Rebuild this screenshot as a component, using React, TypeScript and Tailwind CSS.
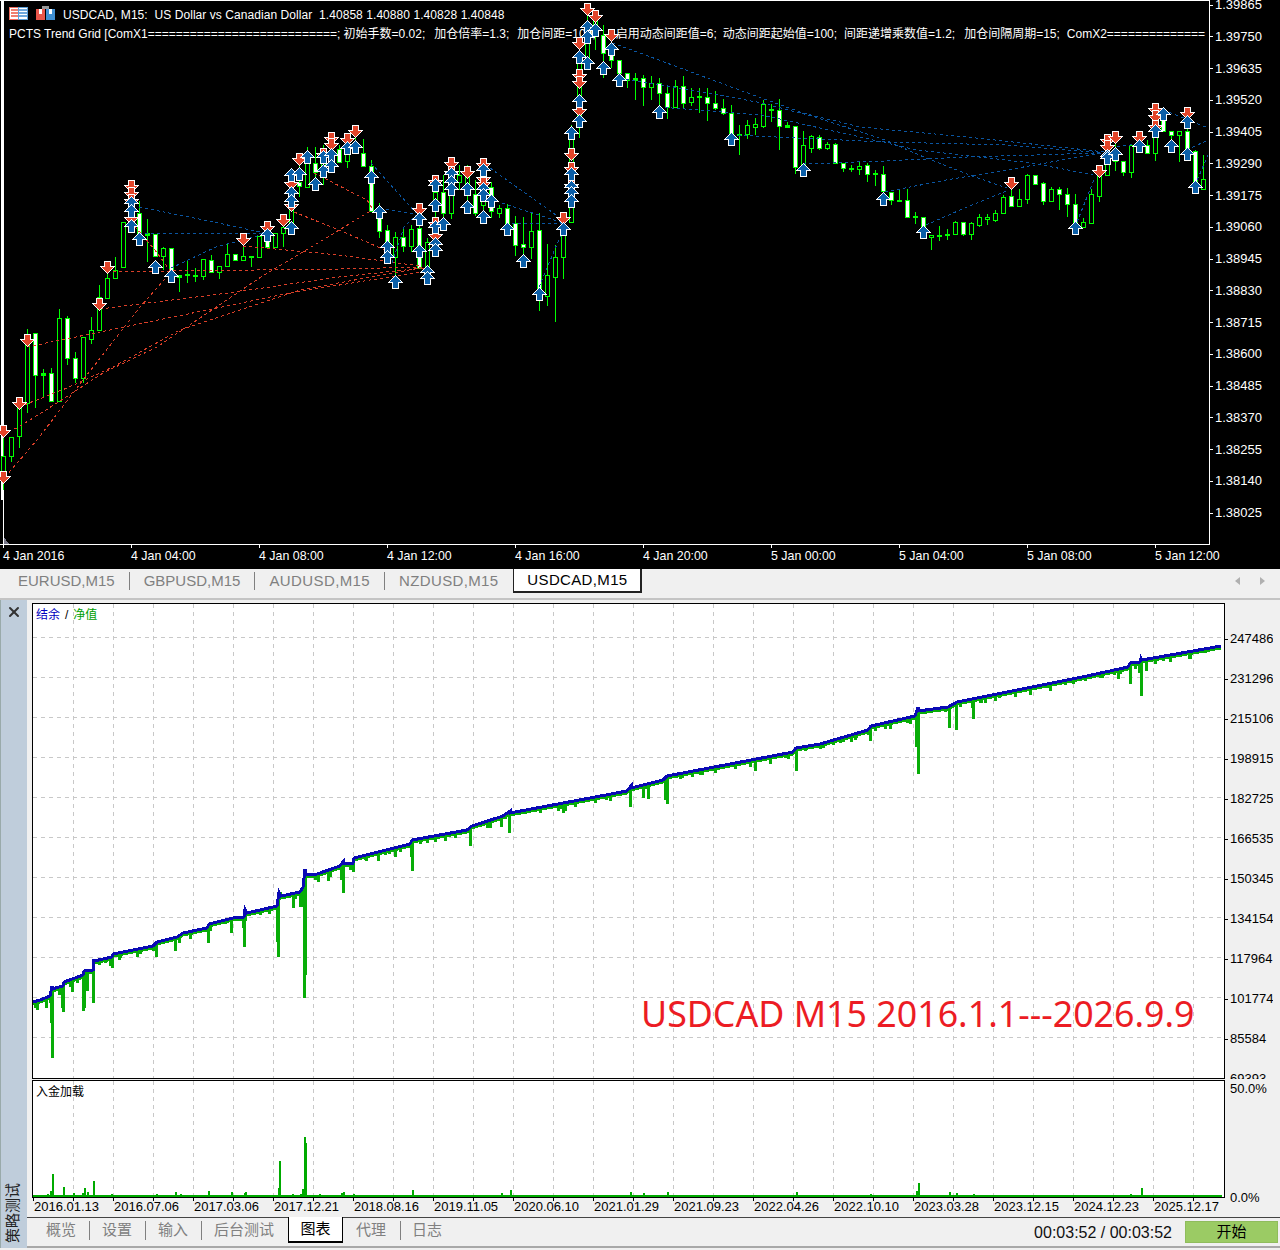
import { X } from "lucide-react";

type Candle = [number, number, number, number, number];
type Pt = [number, number];

const sans = "font-['Liberation_Sans','Noto_Sans_CJK_SC',sans-serif]";

// top, bottom, high, low, white body (pixel rows of the chart, one per 8px bar)
const candles: Candle[] = [
  [456, 475, 426, 490, 0], [437, 456, 437, 462, 0], [408, 436, 405, 448, 0], [343, 403, 329, 413, 0],
  [333, 375, 333, 408, 1], [373, 375, 369, 398, 2], [373, 401, 368, 401, 1], [318, 401, 309, 401, 0],
  [318, 358, 316, 365, 1], [358, 378, 352, 383, 1], [337, 378, 337, 383, 0], [330, 339, 317, 344, 0],
  [297, 330, 285, 330, 0], [278, 298, 262, 298, 0], [270, 278, 257, 278, 0], [222, 267, 222, 267, 0],
  [190, 222, 180, 230, 0], [213, 233, 201, 233, 1], [233, 235, 219, 262, 2], [234, 256, 234, 256, 1],
  [248, 256, 247, 270, 0], [248, 272, 248, 272, 1], [275, 277, 275, 292, 2], [274, 275, 260, 283, 2],
  [275, 276, 268, 282, 2], [259, 276, 259, 280, 0], [260, 272, 255, 272, 1], [266, 272, 266, 279, 0],
  [254, 266, 243, 266, 0], [254, 260, 254, 260, 1], [256, 260, 243, 260, 0], [256, 257, 256, 267, 2],
  [236, 257, 236, 257, 0], [236, 247, 236, 247, 1], [233, 247, 233, 247, 0], [227, 233, 222, 247, 0],
  [210, 228, 208, 228, 0], [182, 186, 165, 197, 1], [163, 187, 147, 187, 0], [163, 172, 147, 185, 1],
  [160, 173, 145, 185, 0], [152, 170, 142, 170, 0], [149, 162, 145, 162, 1], [152, 161, 140, 168, 0],
  [148, 152, 135, 152, 0], [153, 166, 139, 166, 1], [166, 211, 160, 211, 1], [216, 231, 203, 238, 1],
  [230, 245, 225, 260, 1], [237, 257, 232, 275, 0], [237, 246, 228, 252, 1], [229, 246, 225, 252, 0],
  [228, 268, 222, 268, 1], [242, 268, 238, 275, 0], [192, 210, 180, 240, 0], [192, 213, 175, 220, 1],
  [193, 213, 165, 219, 0], [175, 182, 165, 190, 0], [177, 195, 165, 210, 0], [194, 213, 180, 216, 1],
  [175, 205, 160, 212, 0], [187, 211, 182, 218, 1], [208, 213, 205, 218, 0], [208, 225, 204, 230, 1],
  [223, 245, 216, 256, 1], [244, 247, 217, 255, 1], [231, 247, 213, 259, 0], [230, 290, 213, 311, 1],
  [275, 296, 244, 306, 0], [257, 277, 245, 322, 0], [230, 257, 220, 279, 0], [137, 222, 125, 222, 0],
  [60, 127, 40, 138, 0], [25, 68, 10, 68, 0], [20, 35, 16, 50, 0], [35, 53, 25, 78, 1],
  [53, 60, 37, 68, 1], [60, 73, 60, 80, 1], [73, 80, 73, 88, 1], [78, 80, 73, 100, 2],
  [78, 87, 75, 106, 1], [83, 87, 76, 100, 0], [83, 93, 78, 106, 1], [93, 107, 87, 119, 1],
  [86, 107, 80, 107, 0], [86, 103, 76, 108, 1], [97, 102, 88, 106, 0], [96, 97, 88, 113, 2],
  [97, 103, 88, 121, 1], [103, 108, 91, 110, 1], [108, 113, 99, 115, 1], [113, 135, 105, 141, 1],
  [134, 135, 125, 155, 2], [125, 134, 120, 139, 0], [124, 127, 118, 135, 0], [104, 126, 100, 128, 0],
  [109, 110, 104, 122, 2], [110, 126, 99, 150, 1], [125, 127, 122, 128, 2], [126, 167, 126, 174, 1],
  [145, 167, 131, 173, 0], [136, 148, 135, 153, 0], [137, 148, 135, 150, 1], [144, 148, 142, 150, 0],
  [144, 163, 143, 163, 1], [163, 168, 163, 172, 1], [168, 169, 165, 172, 2], [166, 169, 162, 175, 0],
  [165, 174, 163, 182, 1], [173, 174, 170, 186, 2], [174, 191, 166, 195, 1], [192, 200, 192, 205, 1],
  [200, 201, 190, 201, 2], [200, 217, 189, 217, 1], [216, 217, 212, 224, 1], [217, 235, 217, 238, 1],
  [235, 237, 235, 250, 0], [235, 236, 226, 241, 2], [234, 235, 229, 240, 2], [222, 234, 221, 235, 0],
  [222, 234, 222, 236, 1], [223, 234, 222, 240, 0], [217, 225, 214, 227, 0], [217, 219, 214, 225, 0],
  [213, 220, 210, 222, 0], [197, 213, 195, 214, 0], [196, 206, 186, 207, 1], [199, 206, 189, 206, 0],
  [175, 199, 174, 204, 0], [175, 184, 175, 184, 1], [183, 201, 182, 205, 1], [189, 201, 187, 201, 0],
  [189, 194, 187, 210, 1], [194, 204, 188, 217, 1], [204, 227, 194, 231, 1], [222, 227, 218, 228, 0],
  [194, 223, 189, 223, 0], [175, 196, 170, 202, 0], [160, 175, 150, 175, 0], [153, 161, 140, 171, 1],
  [161, 172, 161, 176, 1], [145, 172, 145, 178, 0], [143, 145, 143, 147, 0], [145, 153, 140, 153, 1],
  [137, 153, 120, 161, 0], [119, 131, 110, 131, 1], [131, 135, 131, 153, 1], [131, 135, 131, 162, 0],
  [131, 150, 120, 150, 1], [151, 190, 150, 190, 1], [179, 189, 155, 190, 0],
];

const downArrows: Pt[] = [
  [3, 431], [3, 477], [19, 403], [27, 340], [99, 304], [107, 267], [131, 186], [131, 193], [131, 200], [131, 218],
  [243, 239], [267, 227], [283, 220], [291, 183], [291, 205], [299, 159], [323, 154], [331, 138], [331, 144],
  [347, 139], [355, 131], [419, 209], [435, 181], [435, 223], [435, 235], [451, 163], [451, 172], [467, 172],
  [483, 164], [483, 178], [483, 183], [563, 218], [571, 154], [571, 168], [571, 185], [579, 43], [579, 75],
  [579, 82], [579, 110], [587, 9], [595, 16], [611, 35], [1011, 183], [1099, 171], [1107, 140], [1107, 146],
  [1115, 137], [1139, 137], [1155, 109], [1155, 116], [1155, 126], [1187, 113],
];

const upArrows: Pt[] = [
  [131, 203], [131, 211], [131, 226], [139, 239], [155, 267], [171, 276], [267, 235], [291, 175], [291, 193],
  [291, 201], [291, 228], [299, 174], [307, 157], [315, 184], [323, 157], [323, 171], [331, 155], [331, 166],
  [347, 148], [355, 147], [371, 177], [379, 212], [387, 247], [387, 257], [395, 282], [419, 219], [419, 251],
  [427, 272], [427, 278], [435, 185], [435, 205], [435, 227], [435, 244], [435, 250], [443, 224], [451, 174],
  [451, 182], [451, 189], [467, 189], [467, 207], [483, 170], [483, 189], [483, 195], [483, 217], [491, 201],
  [507, 229], [523, 261], [539, 294], [563, 229], [571, 133], [571, 174], [571, 187], [571, 193], [571, 201],
  [579, 57], [579, 101], [579, 121], [587, 27], [587, 37], [587, 63], [595, 30], [603, 68], [611, 49], [619, 80],
  [659, 112], [731, 139], [803, 170], [883, 199], [923, 232], [1075, 228], [1107, 156], [1107, 158], [1115, 154],
  [1139, 146], [1155, 131], [1163, 114], [1171, 146], [1187, 122], [1187, 154], [1195, 187],
];

const redLines: Pt[][] = [
  [[5, 477], [37, 440], [60, 410], [83, 380], [140, 307], [171, 272]],
  [[3, 433], [17, 428], [57, 403], [103, 373], [157, 347], [261, 277], [318, 243], [372, 210]],
  [[19, 407], [67, 388], [113, 367], [180, 330], [300, 290], [420, 268]],
  [[27, 347], [100, 332], [173, 317], [290, 293], [420, 272]],
  [[100, 309], [228, 293], [339, 277], [424, 268]],
  [[107, 272], [171, 271], [339, 269], [424, 267]],
  [[243, 246], [339, 255], [420, 266]],
  [[294, 212], [339, 230], [385, 250]],
  [[314, 173], [367, 200], [372, 208]],
  [[131, 222], [155, 250], [171, 272]],
];

const blueLines: Pt[][] = [
  [[139, 207], [204, 220], [265, 233]],
  [[139, 233], [265, 234]],
  [[171, 268], [216, 247], [261, 235]],
  [[371, 163], [416, 213]],
  [[380, 208], [416, 214]],
  [[392, 263], [404, 227], [416, 215]],
  [[490, 168], [563, 220]],
  [[502, 203], [563, 223]],
  [[506, 223], [563, 224]],
  [[539, 287], [563, 230]],
  [[612, 43], [640, 53], [734, 88], [803, 113], [860, 127], [967, 137], [1105, 152]],
  [[620, 78], [709, 93], [762, 103], [815, 117], [885, 140], [926, 158], [975, 177], [1007, 188]],
  [[659, 107], [762, 115], [860, 137], [917, 150], [1032, 163], [1093, 175]],
  [[732, 135], [885, 142], [1007, 145], [1105, 153]],
  [[803, 164], [885, 161], [967, 157], [1101, 153]],
  [[885, 192], [946, 180], [1007, 170], [1101, 153]],
  [[926, 225], [967, 207], [1009, 190]],
  [[1077, 222], [1095, 177]],
  [[1105, 148], [1146, 143]],
  [[1164, 110], [1208, 128]],
  [[1187, 150], [1208, 140]],
  [[1195, 185], [1208, 155]],
];

const prices = [
  "1.39865", "1.39750", "1.39635", "1.39520", "1.39405", "1.39290", "1.39175", "1.39060", "1.38945",
  "1.38830", "1.38715", "1.38600", "1.38485", "1.38370", "1.38255", "1.38140", "1.38025",
];

const times = [
  "4 Jan 2016", "4 Jan 04:00", "4 Jan 08:00", "4 Jan 12:00", "4 Jan 16:00",
  "4 Jan 20:00", "5 Jan 00:00", "5 Jan 04:00", "5 Jan 08:00", "5 Jan 12:00",
];

const balance: Pt[] = [
  [33, 1002], [40, 1000], [50, 996], [52, 986], [52, 989], [63, 986], [64, 982], [83, 975], [84, 971], [93, 970],
  [93, 959], [94, 961], [112, 957], [113, 954], [153, 946], [157, 942], [177, 937], [183, 933], [207, 928],
  [209, 924], [233, 918], [244, 917], [245, 909], [247, 913], [277, 906], [279, 892], [281, 896], [300, 892],
  [303, 887], [305, 869], [305, 875], [317, 874], [340, 866], [343, 862], [343, 863], [353, 863], [354, 858],
  [410, 844], [412, 840], [467, 830], [472, 826], [503, 816], [510, 811], [510, 813], [627, 791], [631, 786],
  [631, 788], [663, 780], [667, 776], [793, 752], [796, 748], [820, 744], [868, 730], [871, 726], [915, 716],
  [918, 707], [918, 711], [948, 707], [957, 702], [1087, 676], [1128, 667], [1130, 663], [1140, 662], [1141, 658],
  [1142, 660], [1221, 646],
];

const dips: Pt[] = [
  [37, 1010], [46, 1008], [52, 1058], [51, 1023], [59, 995], [63, 1012], [62, 1008], [72, 992], [77, 983], [83, 1011],
  [84, 1008], [87, 991], [93, 1003], [99, 965], [112, 968], [110, 966], [119, 960], [137, 957], [142, 951], [156, 957],
  [153, 951], [160, 944], [175, 951], [179, 943], [190, 938], [208, 943], [231, 933], [244, 947], [243, 928], [269, 914],
  [278, 957], [277, 942], [293, 908], [300, 907], [302, 907], [304, 998], [305, 975], [318, 882], [328, 881], [343, 893],
  [341, 880], [353, 872], [350, 866], [366, 861], [378, 861], [389, 854], [395, 857], [412, 871], [411, 857], [427, 843],
  [445, 841], [470, 846], [487, 828], [501, 827], [509, 833], [520, 813], [558, 811], [563, 813], [565, 811], [613, 797],
  [606, 800], [630, 807], [643, 798], [648, 799], [665, 800], [667, 804], [682, 778], [692, 777], [702, 775], [713, 771],
  [734, 767], [755, 771], [766, 760], [782, 757], [788, 759], [796, 771], [812, 749], [823, 748], [833, 745], [843, 742],
  [851, 742], [856, 738], [870, 741], [868, 735], [885, 729], [907, 723], [918, 774], [916, 747], [949, 728], [956, 730],
  [973, 719], [972, 708], [981, 703], [985, 703], [999, 698], [1013, 694], [1048, 688], [1073, 684], [1102, 678],
  [1114, 675], [1118, 679], [1130, 684], [1141, 696], [1139, 673], [1146, 671], [1163, 661], [1170, 662], [1189, 659],
  [1217, 650],
];

const loads: Pt[] = [
  [37, 1195], [47, 1194], [52, 1174], [50, 1191], [63, 1187], [73, 1193], [84, 1188], [82, 1193], [87, 1192], [93, 1181],
  [111, 1194], [119, 1195], [138, 1195], [156, 1194], [175, 1192], [180, 1194], [208, 1191], [231, 1192], [244, 1193],
  [245, 1192], [270, 1195], [279, 1161], [278, 1188], [292, 1194], [300, 1194], [302, 1189], [304, 1137], [305, 1143],
  [319, 1194], [328, 1195], [341, 1193], [343, 1192], [353, 1194], [412, 1190], [470, 1195], [501, 1193], [510, 1190],
  [630, 1192], [643, 1193], [667, 1192], [796, 1192], [870, 1194], [916, 1191], [918, 1183], [949, 1192], [956, 1193],
  [973, 1194], [1118, 1195], [1130, 1194], [1139, 1195], [1141, 1188],
];

const balanceLabels = [
  "247486", "231296", "215106", "198915", "182725", "166535", "150345", "134154", "117964", "101774", "85584", "69393",
];

const dates = [
  "2016.01.13", "2016.07.06", "2017.03.06", "2017.12.21", "2018.08.16", "2019.11.05", "2020.06.10", "2021.01.29",
  "2021.09.23", "2022.04.26", "2022.10.10", "2023.03.28", "2023.12.15", "2024.12.23", "2025.12.17",
];

const symbolTabs = [
  { name: "EURUSD,M15", cls: "px-[14px]" },
  { name: "GBPUSD,M15", cls: "px-[14px]" },
  { name: "AUDUSD,M15", cls: "px-[14px] tracking-[0.4px]" },
  { name: "NZDUSD,M15", cls: "px-[14px] tracking-[0.35px]" },
];

const leftTabs = [
  { name: "概览", cls: "pl-[14px] pr-[13px]", sep: true },
  { name: "设置", cls: "pl-[12px] pr-[13px]", sep: true },
  { name: "输入", cls: "pl-[12px] pr-[13px]", sep: true },
  { name: "后台测试", cls: "pl-[12px] pr-[14px]", sep: false },
];

const rightTabs = [
  { name: "代理", cls: "pl-[13px] pr-[14px]", sep: true },
  { name: "日志", cls: "pl-[11px]", sep: false },
];

const paramSegments = [
  { text: "初始手数=0.02;", cls: "" },
  { text: "加仓倍率=1.3;", cls: "ml-[9px]" },
  { text: "加仓间距=100;", cls: "ml-[8px]" },
  { text: "启用动态间距值=6;", cls: "ml-[20px]" },
  { text: "动态间距起始值=100;", cls: "ml-[6px]" },
  { text: "间距递增乘数值=1.2;", cls: "ml-[7px]" },
  { text: "加仓间隔周期=15;", cls: "ml-[9px]" },
  { text: "ComX2==============", cls: "ml-[7px]" },
];

const vGrid = Array.from({ length: 29 }, (_, k) => 73.5 + 40 * k);
const hGrid = Array.from({ length: 11 }, (_, k) => 637.5 + 40 * k);
// small equity teeth that hug the balance line, spaced unevenly
const teeth = Array.from({ length: 238 }, (_, k) => 34 + 5 * k).filter((x) => (x * 13) % 7 < 2);

const toPoints = (pts: Pt[], dy = 0) => pts.map(([x, y]) => `${x},${y + dy}`).join(" ");

function lineY(x: number) {
  for (let i = 1; i < balance.length; i++) {
    const [x0, y0] = balance[i - 1];
    const [x1, y1] = balance[i];
    if (x <= x1) return x1 === x0 ? y1 : y0 + ((x - x0) / (x1 - x0)) * (y1 - y0);
  }
  return balance[balance.length - 1][1];
}

function PriceChart() {
  return (
    <svg width={1209} height={544} viewBox="0 1 1209 544" className="absolute inset-0" shapeRendering="crispEdges">
      <rect x={1} y={0} width={3} height={500} fill="#fff" />
      <rect x={3} y={500} width={1} height={46} fill="#fff" />
      <polygon points="4,537 9,544 4,544" fill="#778" />
      {candles.map(([top, bot, high, low, kind], i) => {
        const x = 3 + 8 * i;
        return (
          <g key={i}>
            <line x1={x + 0.5} x2={x + 0.5} y1={high} y2={low} stroke="#00ff00" />
            <rect
              x={x - 1.5}
              y={top + 0.5}
              width={4}
              height={Math.max(bot - top, 1)}
              fill={kind === 1 ? "#fff" : kind === 2 ? "#00ff00" : "#000"}
              stroke="#00ff00"
            />
          </g>
        );
      })}
      {redLines.map((pts, i) => (
        <polyline key={i} points={toPoints(pts)} fill="none" stroke="#d93f28" strokeDasharray="3 3" />
      ))}
      {blueLines.map((pts, i) => (
        <polyline key={i} points={toPoints(pts)} fill="none" stroke="#0a55a0" strokeDasharray="3 3" />
      ))}
      {downArrows.map(([x, y], i) => (
        <polygon
          key={i}
          transform={`translate(${x + 0.5} ${y})`}
          points="0,6 6,0 2.5,0 2.5,-5.5 -2.5,-5.5 -2.5,0 -6,0"
          fill="#e2452a"
          stroke="#fff"
          strokeWidth={2}
          paintOrder="stroke"
        />
      ))}
      {upArrows.map(([x, y], i) => (
        <polygon
          key={i}
          transform={`translate(${x + 0.5} ${y})`}
          points="0,-6 6,0 2.5,0 2.5,5.5 -2.5,5.5 -2.5,0 -6,0"
          fill="#0b5fa8"
          stroke="#fff"
          strokeWidth={2}
          paintOrder="stroke"
        />
      ))}
    </svg>
  );
}

function SymbolIcons() {
  return (
    <svg width={48} height={15} viewBox="0 0 48 15" className="absolute left-[9px] top-[5px]" shapeRendering="crispEdges">
      <rect x={0.5} y={1.5} width={9} height={12} fill="#fff" stroke="#ee6a5c" />
      <rect x={9.5} y={1.5} width={9} height={12} fill="#fff" stroke="#5d9fd8" />
      <rect x={2} y={3} width={7} height={2} fill="#f08070" />
      <rect x={2} y={6} width={7} height={2} fill="#f08070" />
      <rect x={2} y={9} width={7} height={2} fill="#f08070" />
      <rect x={10} y={3} width={8} height={2} fill="#6fa8dc" />
      <rect x={10} y={6} width={8} height={2} fill="#6fa8dc" />
      <rect x={10} y={9} width={8} height={2} fill="#6fa8dc" />
      <rect x={27} y={3} width={9} height={11} fill="#e9564a" />
      <rect x={30} y={3} width={3} height={5} fill="#fff" />
      <rect x={37} y={3} width={9} height={11} fill="#3f8fd2" />
      <rect x={40} y={3} width={3} height={5} fill="#fff" />
      <rect x={33} y={0} width={7} height={3} fill="#999" />
    </svg>
  );
}

function ChartWindow() {
  return (
    <div className="h-[569px] bg-black flex flex-col text-white overflow-hidden">
      <div className="flex h-[545px]">
        <div className="relative w-[1210px] h-[545px] border-t border-r border-b border-white">
          <div className="absolute left-[63px] top-[6px] text-[12px] tracking-[0.06px] leading-[16px] whitespace-pre">
            USDCAD, M15:  US Dollar vs Canadian Dollar  1.40858 1.40880 1.40828 1.40848
          </div>
          <div className="absolute left-[9px] top-[25px] w-[1200px] overflow-hidden flex text-[12px] leading-[16px] whitespace-pre">
            <span>PCTS Trend Grid [ComX1===========================; </span>
            {paramSegments.map((s) => (
              <span key={s.text} className={s.cls}>{s.text}</span>
            ))}
          </div>
          <SymbolIcons />
          <PriceChart />
        </div>
        <div className="-mt-[3px] h-[524px] flex flex-col justify-between text-[13px] leading-[16px]">
          {prices.map((p) => (
            <div key={p} className="flex items-center">
              <span className="w-[3px] h-px bg-white mr-[2px]" />
              {p}
            </div>
          ))}
        </div>
      </div>
      <div className="flex pl-[3px] pt-px text-[12.4px] leading-[20px]">
        {times.map((t) => (
          <div key={t} className="relative w-[128px] shrink-0">
            <span className="absolute left-0 -top-px w-px h-[3px] bg-white" />
            {t}
          </div>
        ))}
      </div>
    </div>
  );
}

function SymbolTabs() {
  return (
    <div className="h-[31px] bg-[#f0f0f0] border-b-2 border-[#c4c4c4] flex items-start pl-[4px] text-[15px] text-[#808080]">
      {symbolTabs.map((t, i) => (
        <div key={t.name} className="flex items-center h-[24px]">
          <span className={t.cls}>{t.name}</span>
          {i < 3 && <span className="w-px h-[18px] bg-[#808080]" />}
        </div>
      ))}
      <div className="h-[24px] w-[129px] ml-px bg-white border-l border-b-2 border-r-2 border-[#222] flex items-center justify-center pt-[1px] tracking-[0.35px] text-black">
        USDCAD,M15
      </div>
      <div className="ml-auto flex items-center gap-[20px] h-[24px] pr-[15px]">
        <svg width={5} height={8} viewBox="0 0 5 8"><polygon points="5,0 5,8 0,4" fill="#b0b0b0" /></svg>
        <svg width={5} height={8} viewBox="0 0 5 8"><polygon points="0,0 0,8 5,4" fill="#b0b0b0" /></svg>
      </div>
    </div>
  );
}

function EquityPlot() {
  return (
    <div className="flex h-[476px]">
      <div className="relative w-[1193px] h-[476px] bg-white border border-black">
        <svg width={1191} height={474} viewBox="33 604 1191 474" className="block" shapeRendering="crispEdges">
          {vGrid.map((x) => (
            <line key={x} x1={x} x2={x} y1={604} y2={1078} stroke="#c8c8c8" strokeDasharray="4 4" />
          ))}
          {hGrid.map((y) => (
            <line key={y} x1={33} x2={1224} y1={y} y2={y} stroke="#c8c8c8" strokeDasharray="4 4" />
          ))}
          {teeth.map((x) => (
            <rect key={x} x={x} y={lineY(x)} width={3} height={4 + ((x * 7) % 4)} fill="#08ad08" />
          ))}
          {dips.map(([x, y], i) => (
            <rect key={i} x={x - 1} y={lineY(x)} width={3} height={y - lineY(x)} fill="#08ad08" />
          ))}
          <polyline points={toPoints(balance, 2)} fill="none" stroke="#08ad08" strokeWidth={3} />
          <polyline points={toPoints(balance)} fill="none" stroke="#0a0ab4" strokeWidth={3} />
        </svg>
        <div className="absolute left-[3px] top-[3px] text-[12px] leading-[16px] text-black">
          <span className="text-[#0000c0]">结余</span>
          <span className="mx-[5px]">/</span>
          <span className="text-[#00a000]">净值</span>
        </div>
        <div className="absolute left-[608px] top-[385px] text-[35.75px] leading-[48px] text-[#ec1c24] whitespace-pre font-['Noto_Sans',sans-serif]">
          USDCAD M15 2016.1.1---2026.9.9
        </div>
      </div>
      <div className="h-[476px] overflow-hidden">
        <div className="pt-[16px] text-[13px] leading-[40px]">
          {balanceLabels.map((l) => (
            <div key={l} className="flex items-center h-[40px]">
              <span className="w-[3px] h-px bg-black mr-[2px]" />
              {l}
            </div>
          ))}
        </div>
      </div>
    </div>
  );
}

function LoadPlot() {
  return (
    <div className="flex h-[118px] mt-px">
      <div className="relative w-[1193px] h-[118px] bg-white border border-black">
        <svg width={1191} height={116} viewBox="33 1081 1191 116" className="block" shapeRendering="crispEdges">
          {vGrid.map((x) => (
            <line key={x} x1={x} x2={x} y1={1081} y2={1197} stroke="#c8c8c8" strokeDasharray="4 4" />
          ))}
          {loads.map(([x, y], i) => (
            <rect key={i} x={x} y={y} width={2} height={1197 - y} fill="#00aa00" />
          ))}
          <rect x={33} y={1195} width={1189} height={2} fill="#00aa00" />
        </svg>
        <div className="absolute left-[3px] top-[3px] text-[12px] leading-[16px] text-black">入金加载</div>
      </div>
      <div className="h-[118px] flex flex-col justify-between pl-[5px] text-[13px] leading-[16px]">
        <span className="mt-[1px]">50.0%</span>
        <span className="-mb-[8px]">0.0%</span>
      </div>
    </div>
  );
}

function DateAxis() {
  return (
    <div className="h-[19px] flex pl-[1px] text-[13px] leading-[18px] text-black">
      {dates.map((d) => (
        <div key={d} className="relative w-[80px] shrink-0 pl-[1px]">
          <span className="absolute left-0 top-0 w-px h-[3px] bg-black" />
          <span className="absolute left-[40px] top-0 w-px h-[3px] bg-black" />
          {d}
        </div>
      ))}
    </div>
  );
}

function BottomTab({ name, cls, sep }: { name: string; cls: string; sep: boolean }) {
  return (
    <div className="flex items-center">
      <span className={cls}>{name}</span>
      {sep && <span className="w-px h-[19px] bg-[#808080]" />}
    </div>
  );
}

function BottomBar() {
  return (
    <div className="h-[31px] -ml-[5px] border-t border-[#444] border-b-2 border-b-[#a8a8a8] bg-[#f0f0f0] flex items-start pr-[2px]">
      <div className="flex items-center pl-[5px] h-[25px] text-[15px] text-[#808080]">
        {leftTabs.map((t) => (
          <BottomTab key={t.name} {...t} />
        ))}
        <div className="-mt-[1px] h-[26px] w-[55px] bg-white border-l border-b-2 border-r border-black flex items-center justify-center text-black">
          图表
        </div>
        {rightTabs.map((t) => (
          <BottomTab key={t.name} {...t} />
        ))}
      </div>
      <div className="ml-auto flex items-start">
        <span className="mt-[6px] mr-[13px] text-[16px] leading-[18px] text-[#111]">00:03:52 / 00:03:52</span>
        <div className="mt-[3px] h-[22px] w-[93px] bg-[#9bcb64] border border-[#8fbc5c] flex items-center justify-center text-[15px] text-black">
          开始
        </div>
      </div>
    </div>
  );
}

function TesterPanel() {
  return (
    <div className="flex h-[648px]">
      <div className="w-[27px] h-[648px] bg-[#bfcddb] flex flex-col items-center justify-between pt-[4px] pb-[5px] border-l border-[#9aa]">
        <X className="w-[16px] h-[16px] text-[#333]" strokeWidth={3} />
        <span className="[writing-mode:vertical-rl] [text-orientation:sideways] rotate-180 -ml-[3px] text-[15px] leading-[15px] text-[#222]">策略测试</span>
      </div>
      <div className="flex-1 pl-[5px] pt-[3px] flex flex-col min-w-0">
        <EquityPlot />
        <LoadPlot />
        <DateAxis />
        <BottomBar />
      </div>
    </div>
  );
}

export default function App() {
  return (
    <div className={`w-[1280px] h-[1250px] bg-[#f0f0f0] overflow-hidden ${sans}`}>
      <ChartWindow />
      <SymbolTabs />
      <TesterPanel />
    </div>
  );
}
